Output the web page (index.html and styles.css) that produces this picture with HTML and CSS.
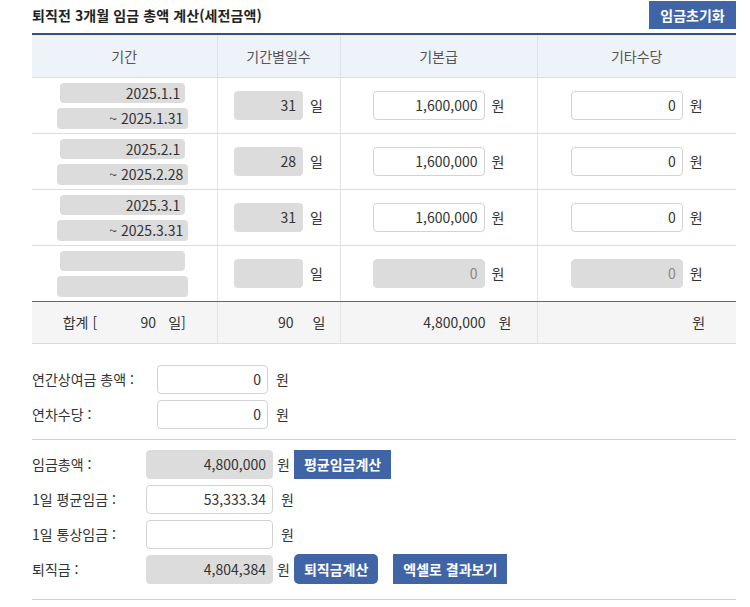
FILE: index.html
```html
<!DOCTYPE html>
<html lang="ko">
<head>
	<meta charset="UTF-8">
	<meta name="viewport" content="width=device-width, initial-scale=1.0">
	<title>퇴직금 계산</title>
	<link rel="stylesheet" href="styles.css">
</head>
<body>
	<div class="wrap">
		<div class="top">
			<h2>퇴직전 3개월 임금 총액 계산(세전금액)</h2>
			<button class="resetBtn">임금초기화</button>
		</div>

		<table class="grid">
			<tr>
				<th class="c1">기간</th>
				<th class="c2">기간별일수</th>
				<th class="c3">기본급</th>
				<th class="c4">기타수당</th>
			</tr>
			<tr>
				<td>
					<div class="dates">
						<input class="dateFrom" type="text" value="2025.1.1" readonly>
						<input class="dateTo" type="text" value="~ 2025.1.31" readonly>
					</div>
				</td>
				<td><div class="fld"><input class="days" type="text" value="31" readonly><span class="unit">일</span></div></td>
				<td><div class="fld"><input class="won" type="text" value="1,600,000"><span class="unit">원</span></div></td>
				<td><div class="fld"><input class="won" type="text" value="0"><span class="unit">원</span></div></td>
			</tr>
			<tr>
				<td>
					<div class="dates">
						<input class="dateFrom" type="text" value="2025.2.1" readonly>
						<input class="dateTo" type="text" value="~ 2025.2.28" readonly>
					</div>
				</td>
				<td><div class="fld"><input class="days" type="text" value="28" readonly><span class="unit">일</span></div></td>
				<td><div class="fld"><input class="won" type="text" value="1,600,000"><span class="unit">원</span></div></td>
				<td><div class="fld"><input class="won" type="text" value="0"><span class="unit">원</span></div></td>
			</tr>
			<tr>
				<td>
					<div class="dates">
						<input class="dateFrom" type="text" value="2025.3.1" readonly>
						<input class="dateTo" type="text" value="~ 2025.3.31" readonly>
					</div>
				</td>
				<td><div class="fld"><input class="days" type="text" value="31" readonly><span class="unit">일</span></div></td>
				<td><div class="fld"><input class="won" type="text" value="1,600,000"><span class="unit">원</span></div></td>
				<td><div class="fld"><input class="won" type="text" value="0"><span class="unit">원</span></div></td>
			</tr>
			<tr class="lastRow">
				<td>
					<div class="dates">
						<input class="dateFrom" type="text" value="" readonly>
						<input class="dateTo" type="text" value="" readonly>
					</div>
				</td>
				<td><div class="fld"><input class="days" type="text" value="" readonly><span class="unit">일</span></div></td>
				<td><div class="fld"><input class="won off" type="text" value="0" disabled><span class="unit">원</span></div></td>
				<td><div class="fld"><input class="won off" type="text" value="0" disabled><span class="unit">원</span></div></td>
			</tr>
			<tr class="sumRow">
				<td><div class="fld">합계 [<span class="sumDays">90</span><span class="unit">일]</span></div></td>
				<td><div class="fld"><span class="sumBox dayBox">90</span><span class="unit">일</span></div></td>
				<td><div class="fld shift"><span class="sumBox payBox">4,800,000</span><span class="unit wide">원</span></div></td>
				<td><div class="fld"><span class="sumBox payBox"></span><span class="unit">원</span></div></td>
			</tr>
		</table>

		<div class="extra">
			<div class="row">
				<label>연간상여금 총액 :</label>
				<input class="amount" type="text" value="0">
				<span class="unit far">원</span>
			</div>
			<div class="row">
				<label>연차수당 :</label>
				<input class="amount" type="text" value="0">
				<span class="unit far">원</span>
			</div>
		</div>

		<div class="result">
			<div class="row">
				<label>임금총액 :</label>
				<input class="amount gray" type="text" value="4,800,000" readonly>
				<span class="unit">원</span>
				<button class="blueBtn">평균임금계산</button>
			</div>
			<div class="row">
				<label>1일 평균임금 :</label>
				<input class="amount" type="text" value="53,333.34">
				<span class="unit far">원</span>
			</div>
			<div class="row">
				<label>1일 통상임금 :</label>
				<input class="amount" type="text" value="">
				<span class="unit far">원</span>
			</div>
			<div class="row">
				<label>퇴직금 :</label>
				<input class="amount gray" type="text" value="4,804,384" readonly>
				<span class="unit">원</span>
				<button class="blueBtn round">퇴직금계산</button>
				<button class="blueBtn excel">엑셀로 결과보기</button>
			</div>
		</div>
	</div>
</body>
</html>
```

FILE: styles.css
```css
* {
	margin: 0;
	padding: 0;
	box-sizing: border-box;
	font-family: "Noto Sans CJK KR", "Noto Sans", sans-serif;
}

body {
	background: #fff;
	color: #333;
	font-size: 14px;
}

.wrap {
	width: 704px;
	margin-left: 32px;
}

.top {
	height: 30px;
	display: flex;
	justify-content: space-between;
	align-items: center;
}

.top h2 {
	font-size: 14px;
	font-weight: bold;
	color: #222;
	letter-spacing: 0.1px;
}

.resetBtn, .blueBtn {
	background: #3f65a7;
	color: #fff;
	border: none;
	font-size: 14px;
	font-weight: bold;
	height: 28px;
	padding: 0 10px;
	cursor: pointer;
}

.resetBtn {
	width: 87px;
}

/* 표 */
.grid {
	width: 100%;
	margin-top: 3px;
	border-collapse: collapse;
	border-top: 2px solid #33507a;
}

.grid th {
	height: 43px;
	background: #eef2f9;
	color: #555;
	font-weight: normal;
	border-bottom: 1px solid #dcdcdc;
	border-right: 1px solid #dde2ea;
}

.grid td {
	height: 56px;
	border-bottom: 1px solid #dcdcdc;
	border-right: 1px solid #e4e4e4;
}

.grid th:last-child, .grid td:last-child {
	border-right: none;
}

.c1 { width: 185px; }
.c2 { width: 123px; }
.c3 { width: 197px; }
.c4 { width: 199px; }

.dates {
	display: flex;
	flex-direction: column;
	align-items: center;
	gap: 5px;
	padding-right: 3px;
	padding-top: 1px;
}

.grid input {
	font-size: 14px;
	color: #333;
	text-align: right;
	border-radius: 4px;
	outline: none;
}

.dateFrom, .dateTo {
	background: #dcdcdc;
	border: none;
	padding-right: 5px;
}

.dateFrom {
	width: 125px;
	height: 20px;
}

.dateTo {
	width: 131px;
	height: 21px;
}

.fld {
	display: flex;
	justify-content: center;
	align-items: center;
}

.days {
	width: 69px;
	height: 29px;
	background: #dcdcdc;
	border: none;
	padding-right: 7px;
}

.won {
	width: 112px;
	height: 29px;
	background: #fff;
	border: 1px solid #d2d2d2;
	padding-right: 6px;
}

.won.off {
	background: #dcdcdc;
	border-color: #dcdcdc;
	color: #888;
}

.unit {
	margin-left: 7px;
}

.lastRow td {
	border-bottom: 1px solid #4a6c9c;
}

.sumRow td {
	height: 42px;
	background: #f5f5f5;
}

.sumDays {
	width: 59px;
	text-align: right;
}

.sumRow .unit {
	margin-left: 12px;
}

.sumBox {
	text-align: right;
}

.dayBox {
	width: 69px;
	padding-right: 7px;
}

.payBox {
	width: 112px;
}

.shift {
	padding-left: 8px;
}

.sumRow .unit.wide {
	margin-left: 13px;
}

/* 아래 입력 */
.row {
	display: flex;
	align-items: center;
	height: 29px;
}

.row label {
	color: #333;
}

.amount {
	width: 111px;
	height: 29px;
	font-size: 14px;
	color: #333;
	text-align: right;
	border: 1px solid #d2d2d2;
	border-radius: 4px;
	padding-right: 6px;
	outline: none;
}

.amount.gray {
	background: #dcdcdc;
	border-color: #dcdcdc;
}

.row .unit {
	margin-left: 4px;
}

.row .unit.far {
	margin-left: 8px;
}

.extra {
	margin-top: 21px;
	padding-bottom: 10px;
	border-bottom: 1px solid #d0d0d0;
	display: flex;
	flex-direction: column;
	gap: 6px;
}

.extra label {
	width: 125px;
}

.result {
	padding-top: 10px;
	padding-bottom: 15px;
	border-bottom: 1px solid #d0d0d0;
	display: flex;
	flex-direction: column;
	gap: 6px;
}

.result .row {
	height: 29px;
}

.result label {
	width: 114px;
}

.result .amount {
	width: 127px;
}

.blueBtn {
	height: 29px;
	margin-left: 4px;
}

.blueBtn.round {
	border-radius: 5px;
	height: 30px;
}

.blueBtn.excel {
	margin-left: 15px;
	height: 30px;
}
```
